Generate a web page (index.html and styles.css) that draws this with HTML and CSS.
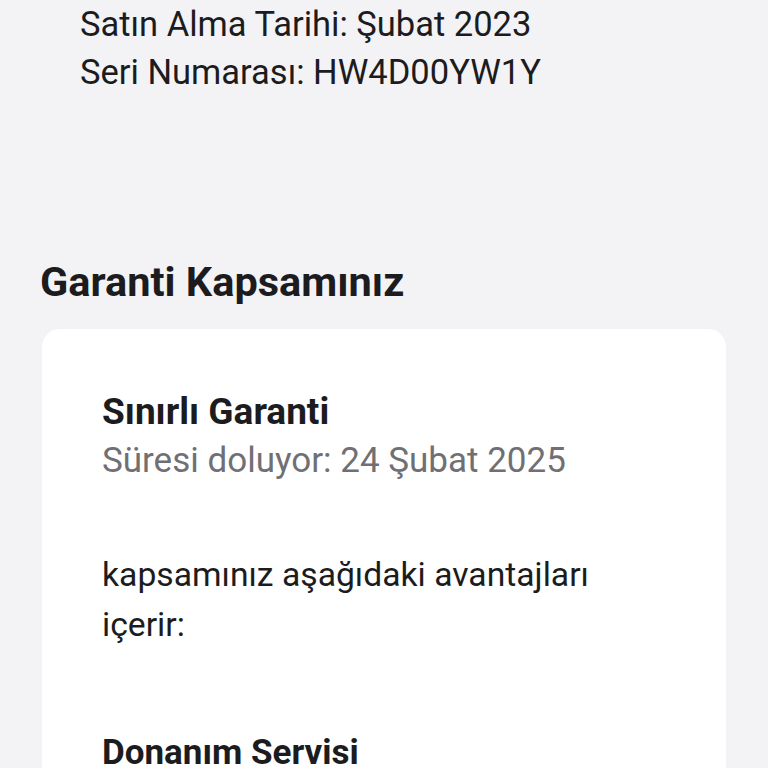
FILE: index.html
```html
<!DOCTYPE html>
<html lang="tr">
<head>
<meta charset="utf-8">
<link rel="stylesheet" href="styles.css">
</head>
<body>
<div class="info">
  <p class="info-line">Satın Alma Tarihi: Şubat 2023</p>
  <p class="info-line">Seri Numarası: HW4D00YW1Y</p>
</div>
<h2 class="section-title">Garanti Kapsamınız</h2>
<div class="card">
  <h3 class="card-title">Sınırlı Garanti</h3>
  <p class="card-sub">Süresi doluyor: 24 Şubat 2025</p>
  <p class="card-text">kapsamınız aşağıdaki avantajları içerir:</p>
  <h3 class="card-title benefit">Donanım Servisi</h3>
</div>
</body>
</html>
```

FILE: styles.css
```css
html, body {
  margin: 0;
  padding: 0;
  background: #f3f3f6;
  font-family: Roboto, "Noto Sans", sans-serif;
  color: #1c1c1e;
  overflow: hidden;
}
p, h2, h3 { margin: 0; }
.info {
  padding: 0 0 0 80px;
}
.info-line {
  font-size: 34.5px;
  line-height: 48px;
}
.section-title {
  margin: 162px 0 0 40px;
  font-size: 41.5px;
  line-height: 48px;
  font-weight: 700;
}
.card {
  margin: 23px 42px 0 42px;
  background: #ffffff;
  border-radius: 18px;
  padding: 61px 60px 40px 60px;
  height: 600px;
}
.card-title {
  font-size: 37px;
  line-height: 44px;
  font-weight: 700;
}
.card-sub {
  margin-top: 2px;
  font-size: 35px;
  line-height: 50px;
  color: #707074;
}
.card-text {
  margin-top: 64px;
  font-size: 33.7px;
  line-height: 50px;
  max-width: 530px;
}
.benefit {
  margin-top: 81px;
  font-size: 35px;
}
```
